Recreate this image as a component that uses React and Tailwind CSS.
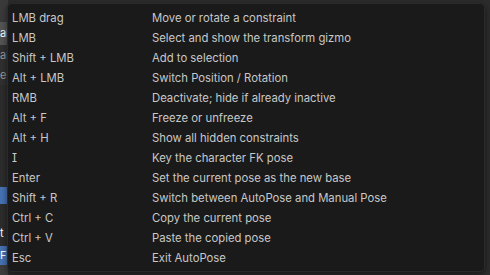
const rows = [
  ["LMB drag", "Move or rotate a constraint"],
  ["LMB", "Select and show the transform gizmo"],
  ["Shift + LMB", "Add to selection"],
  ["Alt + LMB", "Switch Position / Rotation"],
  ["RMB", "Deactivate; hide if already inactive"],
  ["Alt + F", "Freeze or unfreeze"],
  ["Alt + H", "Show all hidden constraints"],
  ["I", "Key the character FK pose"],
  ["Enter", "Set the current pose as the new base"],
  ["Shift + R", "Switch between AutoPose and Manual Pose"],
  ["Ctrl + C", "Copy the current pose"],
  ["Ctrl + V", "Paste the copied pose"],
  ["Esc", "Exit AutoPose"],
]

export default function App() {
  return (
    <div
      className="relative w-[490px] h-[275px] overflow-hidden bg-[#2c2c2c] text-[11.3px] [font-feature-settings:'cv08']"
      style={{ fontFamily: "Inter, 'Noto Sans', sans-serif" }}
    >
      {/* sliver of the panel behind the popup */}
      <div className="absolute left-0 top-0 w-[8px] h-full flex flex-col text-[11px] leading-none">
        <div className="h-[22px] bg-[#3a3a3a]" />
        <div className="h-[23px] bg-[#545454] text-white flex items-center">al</div>
        <div className="h-[20px] bg-[#303030] text-[#9a9a9a] flex items-center">al</div>
        <div className="h-[20px] bg-[#303030] text-[#9a9a9a] flex items-center">e</div>
        <div className="h-[102px] bg-[#2c2c2c]" />
        <div className="h-[17px] bg-[#4772b3]" />
        <div className="h-[20px] bg-[#2c2c2c]" />
        <div className="h-[19px] bg-[#2c2c2c] text-white flex items-center">t</div>
        <div className="h-[3px] bg-[#2c2c2c]" />
        <div className="h-[19px] bg-[#4772b3] text-white flex items-center">F</div>
        <div className="flex-1 bg-[#3d3d3d]" />
      </div>

      <div className="absolute left-[7px] top-[3px] w-[478px] h-[269px] rounded-[5px] bg-[#1a1a1a] border border-[#2a2a2a] shadow-[0_2px_6px_rgba(0,0,0,0.5)] pt-[4px]">
        {rows.map(([key, desc]) => (
          <div key={key} className="flex h-[20px] items-center text-[#c8c8c8]">
            <div className="w-[144px] pl-[4px]">{key}</div>
            <div>{desc}</div>
          </div>
        ))}
      </div>
    </div>
  )
}
